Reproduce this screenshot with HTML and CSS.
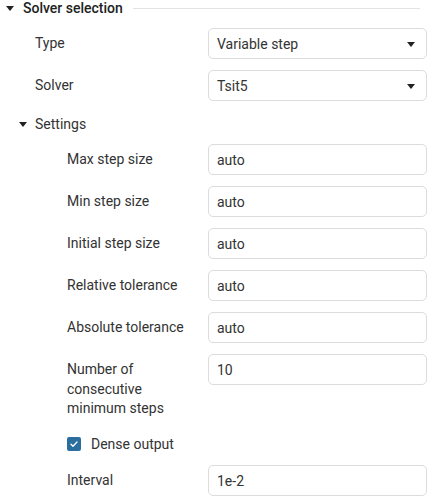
FILE: index.html
```html
<!DOCTYPE html>
<html>
<head>
<meta charset="utf-8">
<link rel="stylesheet" href="styles.css">
</head>
<body>
<div class="panel">
  <div class="group-head">
    <span class="caret"></span>
    <span class="group-title">Solver selection</span>
    <span class="rule"></span>
  </div>
  <div class="group-body">
    <div class="row">
      <div class="label">Type</div>
      <div class="select"><span>Variable step</span><span class="arrow"></span></div>
    </div>
    <div class="row">
      <div class="label">Solver</div>
      <div class="select"><span>Tsit5</span><span class="arrow"></span></div>
    </div>
    <div class="sub-head">
      <span class="caret"></span>
      <span>Settings</span>
    </div>
    <div class="sub-body">
      <div class="row">
        <div class="label">Max step size</div>
        <div class="input">auto</div>
      </div>
      <div class="row">
        <div class="label">Min step size</div>
        <div class="input">auto</div>
      </div>
      <div class="row">
        <div class="label">Initial step size</div>
        <div class="input">auto</div>
      </div>
      <div class="row">
        <div class="label">Relative tolerance</div>
        <div class="input">auto</div>
      </div>
      <div class="row">
        <div class="label">Absolute tolerance</div>
        <div class="input">auto</div>
      </div>
      <div class="row">
        <div class="label">Number of consecutive minimum steps</div>
        <div class="input">10</div>
      </div>
      <div class="check-row">
        <span class="checkbox"><svg width="14" height="14" viewBox="0 0 14 14"><path d="M4 7.2 L6 9.2 L10 5" fill="none" stroke="#fff" stroke-width="1.3" stroke-linecap="round" stroke-linejoin="round"/></svg></span>
        <span>Dense output</span>
      </div>
      <div class="row interval">
        <div class="label">Interval</div>
        <div class="input">1e-2</div>
      </div>
    </div>
  </div>
</div>
</body>
</html>
```

FILE: styles.css
```css
html, body {
  margin: 0;
  padding: 0;
  background: #ffffff;
}
body {
  font-family: Roboto, "Liberation Sans", sans-serif;
  font-size: 14px;
  color: #333333;
}
.panel {
  width: 435px;
}
.group-head {
  display: flex;
  align-items: center;
  height: 16px;
  padding-left: 6px;
  padding-right: 15px;
}
.caret {
  width: 0;
  height: 0;
  border-left: 4px solid transparent;
  border-right: 4px solid transparent;
  border-top: 5px solid #222222;
  flex: none;
}
.group-title {
  margin-left: 9px;
  font-weight: 500;
  color: #222222;
  line-height: 16px;
}
.rule {
  flex: 1;
  height: 1px;
  background: #e3e3e3;
  margin-left: 10px;
}
.group-body {
  display: flex;
  flex-direction: column;
  gap: 11px;
  padding-left: 35px;
  padding-right: 8px;
  padding-top: 12px;
}
.row {
  display: flex;
  align-items: flex-start;
}
.label {
  flex: 1;
  padding-top: 6px;
  line-height: 19.5px;
  padding-right: 8px;
}
.select, .input {
  flex: none;
  width: 219px;
  height: 31px;
  box-sizing: border-box;
  border: 1px solid #dcdcdc;
  border-radius: 5px;
  padding-left: 8px;
  padding-top: 1px;
  display: flex;
  align-items: center;
  color: #333333;
}
.select {
  justify-content: space-between;
  padding-right: 11px;
}
.arrow {
  width: 0;
  height: 0;
  border-left: 4px solid transparent;
  border-right: 4px solid transparent;
  border-top: 5px solid #222222;
}
.sub-head {
  display: flex;
  align-items: center;
  height: 20px;
  margin-left: -16px;
  margin-top: 2px;
}
.sub-head .caret {
  margin-right: 8px;
}
.sub-body {
  display: flex;
  flex-direction: column;
  gap: 11px;
  padding-left: 32px;
  margin-top: -1px;
}
.check-row {
  display: flex;
  align-items: center;
  height: 24px;
  margin-top: 2px;
}
.interval {
  margin-top: -2px;
}
.checkbox {
  width: 14px;
  height: 14px;
  background: #2b6e9e;
  border-radius: 2px;
  margin-right: 10px;
  display: flex;
}
```
